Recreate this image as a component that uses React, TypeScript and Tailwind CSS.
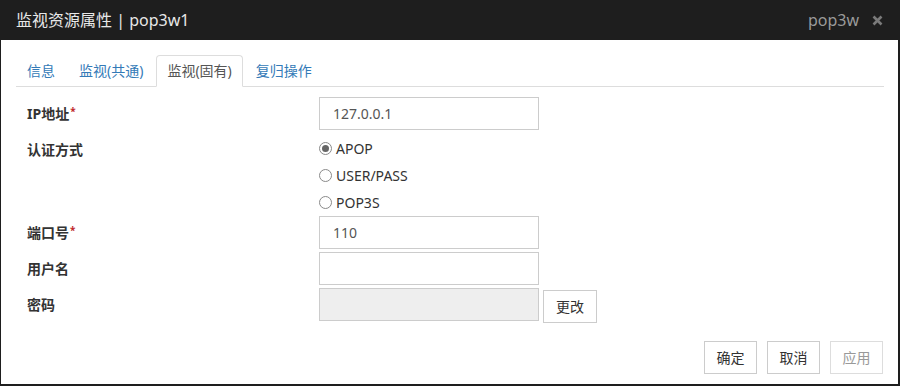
const font = "font-['Noto_Sans','Noto_Sans_CJK_SC',sans-serif]";

const tabs = ["信息", "监视(共通)", "监视(固有)", "复归操作"];

function Star() {
  return <sup className="text-[#c0282a] text-[10px] font-bold relative -top-[4px] ml-px">*</sup>;
}

function Radio({ label, checked }: { label: string; checked?: boolean }) {
  return (
    <label className="h-[27px] flex items-center gap-[4px] text-[14px] text-[#333]">
      <span className="w-[13px] h-[13px] rounded-full border border-[#8a8a8a] bg-white flex items-center justify-center">
        {checked && <span className="w-[7px] h-[7px] rounded-full bg-[#666]" />}
      </span>
      {label}
    </label>
  );
}

function Input({ value, disabled }: { value?: string; disabled?: boolean }) {
  return (
    <div
      className={`w-[220px] h-[33px] border border-[#ccc] pl-[13px] flex items-center text-[14px] text-[#555] ${
        disabled ? "bg-[#eee]" : "bg-white"
      }`}
    >
      {value}
    </div>
  );
}

function Button({ children, disabled }: { children: string; disabled?: boolean }) {
  return (
    <button
      className={`w-[53px] h-[33px] border bg-white text-[14px] flex items-center justify-center ${
        disabled ? "border-[#ddd] text-[#999]" : "border-[#ccc] text-[#333]"
      }`}
    >
      {children}
    </button>
  );
}

export default function App() {
  return (
    <div className={`w-[900px] h-[386px] bg-[#1e1e1e] pl-px pr-[2px] pb-[2px] flex flex-col ${font}`}>
      {/* 标题栏 */}
      <div className="h-10 flex items-center justify-between pl-[15px] pr-[15px]">
        <div className="text-[16px] text-[#e8e8e8]">监视资源属性 | pop3w1</div>
        <div className="flex items-center gap-[13px]">
          <span className="text-[16px] text-[#9a9a9a]">pop3w</span>
          <svg width="11" height="11" viewBox="0 0 11 11">
            <path d="M1.5 1.5 L9.5 9.5 M9.5 1.5 L1.5 9.5" stroke="#7a7a7a" strokeWidth="2.6" />
          </svg>
        </div>
      </div>

      <div className="flex-1 bg-white pl-[15px] pr-[14px] pt-[15px] pb-[10px] flex flex-col">
        {/* 标签页 */}
        <ul className="flex border-b border-[#ddd]">
          {tabs.map((t, i) => (
            <li key={t} className="-mb-px mr-[2px]">
              <a
                className={`block px-[10px] py-[5px] leading-5 text-[14px] border rounded-t-[4px] ${
                  i === 2
                    ? "border-[#ddd] border-b-white bg-white text-[#555]"
                    : "border-transparent text-[#337ab7]"
                }`}
              >
                {t}
              </a>
            </li>
          ))}
        </ul>

        {/* 表单 */}
        <div className="pl-[11px] pt-[10px] flex flex-col">
          <div className="flex items-center">
            <div className="w-[292px] text-[14px] font-bold text-[#333]">
              IP地址<Star />
            </div>
            <Input value="127.0.0.1" />
          </div>

          <div className="flex mt-[5px]">
            <div className="w-[292px] h-[27px] flex items-center text-[14px] font-bold text-[#333] pt-[2px]">认证方式</div>
            <div className="flex flex-col">
              <Radio label="APOP" checked />
              <Radio label="USER/PASS" />
              <Radio label="POP3S" />
            </div>
          </div>

          <div className="flex items-center">
            <div className="w-[292px] text-[14px] font-bold text-[#333]">
              端口号<Star />
            </div>
            <Input value="110" />
          </div>

          <div className="flex items-center mt-[3px]">
            <div className="w-[292px] text-[14px] font-bold text-[#333]">用户名</div>
            <Input />
          </div>

          <div className="flex items-start mt-[3px]">
            <div className="w-[292px] h-[33px] flex items-center text-[14px] font-bold text-[#333]">密码</div>
            <Input disabled />
            <div className="ml-[4px] mt-[2px]">
              <button className="w-[54px] h-[33px] border border-[#ccc] bg-white text-[14px] text-[#333]">更改</button>
            </div>
          </div>
        </div>

        {/* 底部按钮 */}
        <div className="mt-auto flex justify-end gap-[10px] pr-px">
          <Button>确定</Button>
          <Button>取消</Button>
          <Button disabled>应用</Button>
        </div>
      </div>
    </div>
  );
}
